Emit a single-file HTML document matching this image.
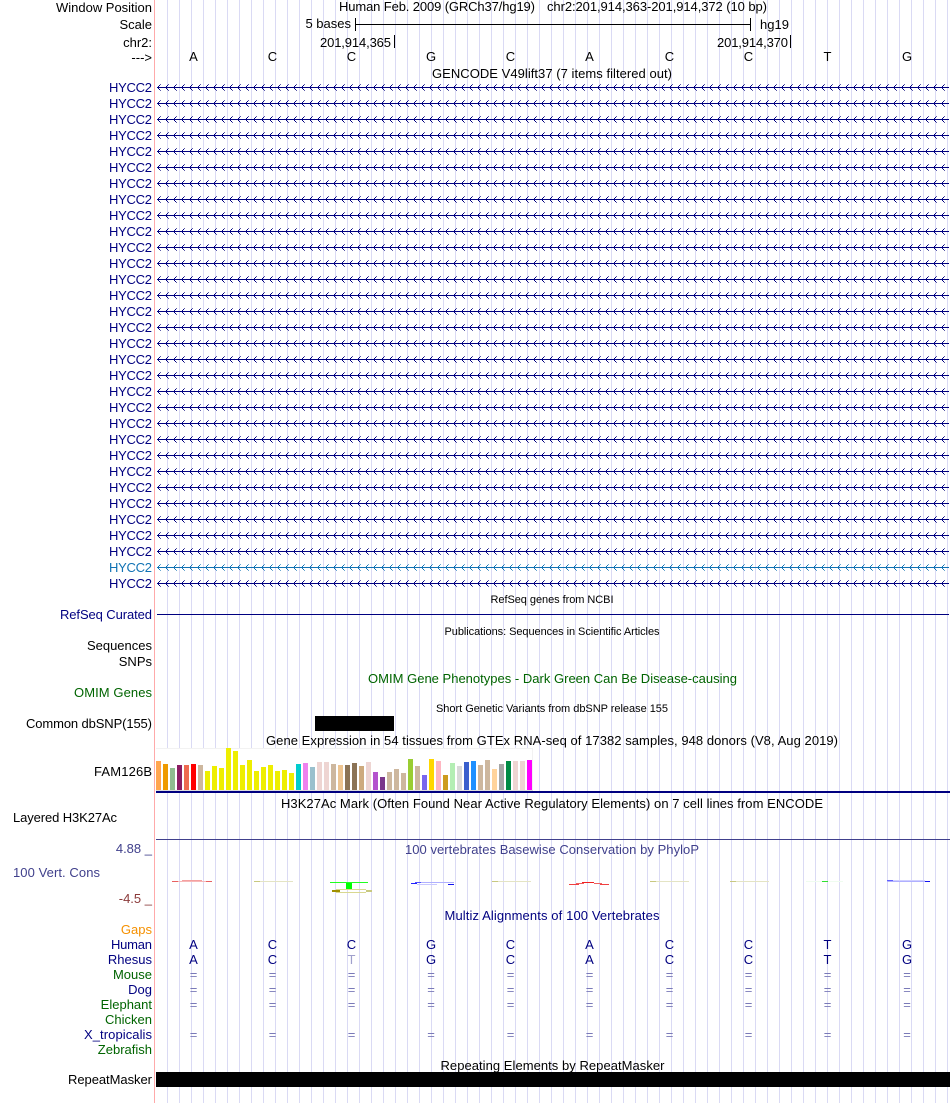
<!DOCTYPE html>
<html><head><meta charset="utf-8"><style>
html,body{margin:0;padding:0;background:#fff;width:950px;height:1103px;overflow:hidden}
svg{display:block}
text{font-family:"Liberation Sans",sans-serif;font-size:13px;fill:#000}
.r{text-anchor:end}
.c{text-anchor:middle}
.n{fill:#000080}
.g{fill:#006400}
.s{font-size:11px}
.e{fill:#7a7ab8}
.l{fill:#000080}
</style></head><body>
<svg width="950" height="1103" viewBox="0 0 950 1103" xmlns="http://www.w3.org/2000/svg">
<defs>
<pattern id="grid" patternUnits="userSpaceOnUse" x="167" y="0" width="12" height="10"><rect width="1" height="10" fill="#dadaf4"/></pattern>
<pattern id="arr" patternUnits="userSpaceOnUse" x="157" y="84" width="8" height="16"><path fill="#000080" d="M0 3h8v1H0zM1 2h1v1H1zM1 4h1v1H1zM2 1h1v1H2zM2 5h1v1H2z"/><path fill="#5a5aa8" d="M3 0h1v1H3zM3 6h1v1H3z"/></pattern>
<pattern id="arb" patternUnits="userSpaceOnUse" x="157" y="564" width="8" height="7"><path fill="#1072b4" d="M0 3h8v1H0zM1 2h1v1H1zM1 4h1v1H1zM2 1h1v1H2zM2 5h1v1H2z"/><path fill="#6aa8d0" d="M3 0h1v1H3zM3 6h1v1H3z"/></pattern>
</defs>
<g shape-rendering="crispEdges">
<rect x="156" y="0" width="794" height="1103" fill="url(#grid)"/>
<rect x="154" y="0" width="1" height="1103" fill="#ffaaaa"/>
<rect x="157" y="84" width="792" height="503" fill="url(#arr)" />
<rect x="157" y="564" width="793" height="7" fill="#fff"/>
<rect x="157" y="564" width="793" height="7" fill="url(#grid)"/>
<rect x="157" y="564" width="792" height="7" fill="url(#arb)"/>
<rect x="157" y="614" width="792" height="1" fill="#000080"/>
<rect x="315" y="716" width="79" height="15" fill="#000"/>
<rect x="156" y="748" width="377" height="43" fill="#fff"/>
<rect x="156" y="748" width="377" height="1" fill="#f2f2f2"/>
<rect x="532" y="748" width="1" height="43" fill="#f2f2f2"/>
<rect x="156" y="790" width="377" height="1" fill="#ddd"/>
<rect x="156" y="761" width="5" height="29" fill="#FFA54F"/>
<rect x="163" y="764" width="5" height="26" fill="#EE9A00"/>
<rect x="170" y="768" width="5" height="22" fill="#8FBC8F"/>
<rect x="177" y="765" width="5" height="25" fill="#8B1C62"/>
<rect x="184" y="765" width="5" height="25" fill="#EE6A50"/>
<rect x="191" y="764" width="5" height="26" fill="#FF0000"/>
<rect x="198" y="765" width="5" height="25" fill="#CDB79E"/>
<rect x="205" y="771" width="5" height="19" fill="#EEEE00"/>
<rect x="212" y="766" width="5" height="24" fill="#EEEE00"/>
<rect x="219" y="768" width="5" height="22" fill="#EEEE00"/>
<rect x="226" y="748" width="5" height="42" fill="#EEEE00"/>
<rect x="233" y="751" width="5" height="39" fill="#EEEE00"/>
<rect x="240" y="765" width="5" height="25" fill="#EEEE00"/>
<rect x="247" y="760" width="5" height="30" fill="#EEEE00"/>
<rect x="254" y="771" width="5" height="19" fill="#EEEE00"/>
<rect x="261" y="767" width="5" height="23" fill="#EEEE00"/>
<rect x="268" y="765" width="5" height="25" fill="#EEEE00"/>
<rect x="275" y="771" width="5" height="19" fill="#EEEE00"/>
<rect x="282" y="770" width="5" height="20" fill="#EEEE00"/>
<rect x="289" y="773" width="5" height="17" fill="#EEEE00"/>
<rect x="296" y="764" width="5" height="26" fill="#00CDCD"/>
<rect x="303" y="763" width="5" height="27" fill="#EE82EE"/>
<rect x="310" y="767" width="5" height="23" fill="#9AC0CD"/>
<rect x="317" y="762" width="5" height="28" fill="#EED5D2"/>
<rect x="324" y="762" width="5" height="28" fill="#EED5D2"/>
<rect x="331" y="764" width="5" height="26" fill="#CDB79E"/>
<rect x="338" y="765" width="5" height="25" fill="#EEC591"/>
<rect x="345" y="765" width="5" height="25" fill="#8B7355"/>
<rect x="352" y="763" width="5" height="27" fill="#8B7355"/>
<rect x="359" y="766" width="5" height="24" fill="#CDAA7D"/>
<rect x="366" y="762" width="5" height="28" fill="#EED5D2"/>
<rect x="373" y="772" width="5" height="18" fill="#B452CD"/>
<rect x="380" y="777" width="5" height="13" fill="#7A378B"/>
<rect x="387" y="772" width="5" height="18" fill="#CDB79E"/>
<rect x="394" y="769" width="5" height="21" fill="#CDB79E"/>
<rect x="401" y="773" width="5" height="17" fill="#CDB79E"/>
<rect x="408" y="759" width="5" height="31" fill="#9ACD32"/>
<rect x="415" y="766" width="5" height="24" fill="#CDB79E"/>
<rect x="422" y="775" width="5" height="15" fill="#7A67EE"/>
<rect x="429" y="759" width="5" height="31" fill="#FFD700"/>
<rect x="436" y="761" width="5" height="29" fill="#FFB6C1"/>
<rect x="443" y="775" width="5" height="15" fill="#CD9B1D"/>
<rect x="450" y="763" width="5" height="27" fill="#B4EEB4"/>
<rect x="457" y="766" width="5" height="24" fill="#D9D9D9"/>
<rect x="464" y="762" width="5" height="28" fill="#3A5FCD"/>
<rect x="471" y="761" width="5" height="29" fill="#1E90FF"/>
<rect x="478" y="765" width="5" height="25" fill="#CDB79E"/>
<rect x="485" y="760" width="5" height="30" fill="#CDB79E"/>
<rect x="492" y="769" width="5" height="21" fill="#FFD39B"/>
<rect x="499" y="764" width="5" height="26" fill="#A6A6A6"/>
<rect x="506" y="761" width="5" height="29" fill="#008B45"/>
<rect x="513" y="761" width="5" height="29" fill="#EED5D2"/>
<rect x="520" y="761" width="5" height="29" fill="#EED5D2"/>
<rect x="527" y="760" width="5" height="30" fill="#FF00FF"/>
<rect x="156" y="791" width="794" height="2" fill="#000080"/>
<rect x="156" y="839" width="794" height="1" fill="#40408c"/>
<rect x="156" y="1072" width="794" height="15" fill="#000"/>
<rect x="355" y="24" width="396" height="1" fill="#000"/>
<rect x="355" y="18" width="1" height="13" fill="#000"/>
<rect x="750" y="18" width="1" height="13" fill="#000"/>
<rect x="394" y="35" width="1" height="13" fill="#000"/>
<rect x="790" y="35" width="1" height="13" fill="#000"/>
<rect x="172" y="881" width="40" height="1" fill="#f7b8b8"/><rect x="182" y="880" width="20" height="1" fill="#f4a0a0"/><rect x="172" y="881" width="6" height="1" fill="#e86060"/><rect x="206" y="881" width="6" height="1" fill="#e86060"/>
<rect x="254" y="881" width="39" height="1" fill="#e4e4c4"/><rect x="254" y="881" width="6" height="1" fill="#c8c880"/>
<rect x="330" y="882" width="38" height="1" fill="#20ff20"/><rect x="346" y="883" width="6" height="6" fill="#00ff00"/>
<rect x="336" y="889" width="30" height="1" fill="#d8d890"/><rect x="336" y="892" width="30" height="1" fill="#d8d890"/><rect x="332" y="890" width="8" height="2" fill="#a09000"/><rect x="366" y="890" width="6" height="2" fill="#c8c880"/>
<rect x="411" y="883" width="6" height="1" fill="#2020ff"/><rect x="415" y="882" width="39" height="1" fill="#b0b0ff"/><rect x="417" y="884" width="20" height="1" fill="#c8c8ff"/><rect x="448" y="884" width="6" height="1" fill="#1010f0"/><rect x="415" y="882" width="6" height="1" fill="#5050ff"/>
<rect x="492" y="881" width="39" height="1" fill="#e4e4c4"/><rect x="492" y="881" width="6" height="1" fill="#c8c880"/>
<rect x="569" y="884" width="10" height="1" fill="#f04040"/><rect x="576" y="883" width="8" height="1" fill="#f06060"/><rect x="582" y="882" width="12" height="1" fill="#f02020"/><rect x="594" y="883" width="8" height="1" fill="#f06060"/><rect x="600" y="884" width="9" height="1" fill="#f04040"/>
<rect x="650" y="881" width="39" height="1" fill="#e4e4c4"/><rect x="650" y="881" width="6" height="1" fill="#c8c880"/>
<rect x="730" y="881" width="39" height="1" fill="#e4e4c4"/><rect x="730" y="881" width="6" height="1" fill="#c8c880"/>
<rect x="806" y="881" width="37" height="1" fill="#effcef"/><rect x="822" y="881" width="6" height="1" fill="#30e030"/>
<rect x="887" y="881" width="43" height="1" fill="#b0b0ff"/><rect x="887" y="880" width="6" height="1" fill="#6060ff"/><rect x="893" y="880" width="32" height="1" fill="#d0d0ff"/><rect x="925" y="881" width="5" height="1" fill="#1010f0"/>
</g>
<text x="152" y="12" class="r" textLength="96">Window Position</text>
<text x="152" y="29" class="r">Scale</text>
<text x="152" y="47" class="r">chr2:</text>
<text x="152" y="62" class="r">---&gt;</text>
<text x="339" y="11" textLength="196">Human Feb. 2009 (GRCh37/hg19)</text>
<text x="547" y="11" textLength="220">chr2:201,914,363-201,914,372 (10 bp)</text>
<text x="351" y="28" class="r">5 bases</text>
<text x="760" y="29">hg19</text>
<text x="391" y="47" class="r" textLength="71">201,914,365</text>
<text x="788" y="47" class="r" textLength="71">201,914,370</text>
<text x="193.500" y="61" class="c">A</text>
<text x="272.500" y="61" class="c">C</text>
<text x="351.500" y="61" class="c">C</text>
<text x="431" y="61" class="c">G</text>
<text x="510.500" y="61" class="c">C</text>
<text x="589.500" y="61" class="c">A</text>
<text x="669.500" y="61" class="c">C</text>
<text x="748.500" y="61" class="c">C</text>
<text x="827.500" y="61" class="c">T</text>
<text x="907" y="61" class="c">G</text>
<text x="552" y="78" class="c" textLength="240">GENCODE V49lift37 (7 items filtered out)</text>
<text x="152" y="92" class="r n" textLength="43">HYCC2</text>
<text x="152" y="108" class="r n" textLength="43">HYCC2</text>
<text x="152" y="124" class="r n" textLength="43">HYCC2</text>
<text x="152" y="140" class="r n" textLength="43">HYCC2</text>
<text x="152" y="156" class="r n" textLength="43">HYCC2</text>
<text x="152" y="172" class="r n" textLength="43">HYCC2</text>
<text x="152" y="188" class="r n" textLength="43">HYCC2</text>
<text x="152" y="204" class="r n" textLength="43">HYCC2</text>
<text x="152" y="220" class="r n" textLength="43">HYCC2</text>
<text x="152" y="236" class="r n" textLength="43">HYCC2</text>
<text x="152" y="252" class="r n" textLength="43">HYCC2</text>
<text x="152" y="268" class="r n" textLength="43">HYCC2</text>
<text x="152" y="284" class="r n" textLength="43">HYCC2</text>
<text x="152" y="300" class="r n" textLength="43">HYCC2</text>
<text x="152" y="316" class="r n" textLength="43">HYCC2</text>
<text x="152" y="332" class="r n" textLength="43">HYCC2</text>
<text x="152" y="348" class="r n" textLength="43">HYCC2</text>
<text x="152" y="364" class="r n" textLength="43">HYCC2</text>
<text x="152" y="380" class="r n" textLength="43">HYCC2</text>
<text x="152" y="396" class="r n" textLength="43">HYCC2</text>
<text x="152" y="412" class="r n" textLength="43">HYCC2</text>
<text x="152" y="428" class="r n" textLength="43">HYCC2</text>
<text x="152" y="444" class="r n" textLength="43">HYCC2</text>
<text x="152" y="460" class="r n" textLength="43">HYCC2</text>
<text x="152" y="476" class="r n" textLength="43">HYCC2</text>
<text x="152" y="492" class="r n" textLength="43">HYCC2</text>
<text x="152" y="508" class="r n" textLength="43">HYCC2</text>
<text x="152" y="524" class="r n" textLength="43">HYCC2</text>
<text x="152" y="540" class="r n" textLength="43">HYCC2</text>
<text x="152" y="556" class="r n" textLength="43">HYCC2</text>
<text x="152" y="572" class="r" style="fill:#1072b4" textLength="43">HYCC2</text>
<text x="152" y="588" class="r n" textLength="43">HYCC2</text>
<text x="552" y="603" class="c s" textLength="123">RefSeq genes from NCBI</text>
<text x="152" y="619" class="r n" textLength="92">RefSeq Curated</text>
<text x="552" y="635" class="c s" textLength="215">Publications: Sequences in Scientific Articles</text>
<text x="152" y="650" class="r">Sequences</text>
<text x="152" y="666" class="r">SNPs</text>
<text x="552.500" y="683" class="c g" textLength="369">OMIM Gene Phenotypes - Dark Green Can Be Disease-causing</text>
<text x="152" y="697" class="r g" textLength="78">OMIM Genes</text>
<text x="552" y="712" class="c s" textLength="232">Short Genetic Variants from dbSNP release 155</text>
<text x="152" y="728" class="r" textLength="126">Common dbSNP(155)</text>
<text x="552" y="745" class="c" textLength="572">Gene Expression in 54 tissues from GTEx RNA-seq of 17382 samples, 948 donors (V8, Aug 2019)</text>
<text x="152" y="776" class="r" textLength="58">FAM126B</text>
<text x="552" y="808" class="c" textLength="542">H3K27Ac Mark (Often Found Near Active Regulatory Elements) on 7 cell lines from ENCODE</text>
<text x="13" y="822" textLength="104">Layered H3K27Ac</text>
<text x="152" y="853" class="r" style="fill:#40408c">4.88 _</text>
<text x="552" y="854" class="c" style="fill:#40408c" textLength="294">100 vertebrates Basewise Conservation by PhyloP</text>
<text x="13" y="877" style="fill:#40408c" textLength="87">100 Vert. Cons</text>
<text x="152" y="903" class="r" style="fill:#8b3a3a">-4.5 _</text>
<text x="552" y="920" class="c n" textLength="215">Multiz Alignments of 100 Vertebrates</text>
<text x="152" y="934" class="r" style="fill:#f59000">Gaps</text>
<text x="152" y="949" class="r n" textLength="41">Human</text>
<text x="152" y="964" class="r n">Rhesus</text>
<text x="152" y="979" class="r g">Mouse</text>
<text x="152" y="994" class="r n">Dog</text>
<text x="152" y="1009" class="r g">Elephant</text>
<text x="152" y="1024" class="r g">Chicken</text>
<text x="152" y="1039" class="r n" textLength="68">X_tropicalis</text>
<text x="152" y="1054" class="r g">Zebrafish</text>
<text x="193.500" y="949" class="c l">A</text><text x="272.500" y="949" class="c l">C</text><text x="351.500" y="949" class="c l">C</text><text x="431" y="949" class="c l">G</text><text x="510.500" y="949" class="c l">C</text><text x="589.500" y="949" class="c l">A</text><text x="669.500" y="949" class="c l">C</text><text x="748.500" y="949" class="c l">C</text><text x="827.500" y="949" class="c l">T</text><text x="907" y="949" class="c l">G</text>
<text x="193.500" y="964" class="c l">A</text><text x="272.500" y="964" class="c l">C</text><text x="351.500" y="964" class="c" style="fill:#a0a0cc">T</text><text x="431" y="964" class="c l">G</text><text x="510.500" y="964" class="c l">C</text><text x="589.500" y="964" class="c l">A</text><text x="669.500" y="964" class="c l">C</text><text x="748.500" y="964" class="c l">C</text><text x="827.500" y="964" class="c l">T</text><text x="907" y="964" class="c l">G</text>
<text x="193.500" y="979" class="c e">=</text><text x="272.500" y="979" class="c e">=</text><text x="351.500" y="979" class="c e">=</text><text x="431" y="979" class="c e">=</text><text x="510.500" y="979" class="c e">=</text><text x="589.500" y="979" class="c e">=</text><text x="669.500" y="979" class="c e">=</text><text x="748.500" y="979" class="c e">=</text><text x="827.500" y="979" class="c e">=</text><text x="907" y="979" class="c e">=</text>
<text x="193.500" y="994" class="c e">=</text><text x="272.500" y="994" class="c e">=</text><text x="351.500" y="994" class="c e">=</text><text x="431" y="994" class="c e">=</text><text x="510.500" y="994" class="c e">=</text><text x="589.500" y="994" class="c e">=</text><text x="669.500" y="994" class="c e">=</text><text x="748.500" y="994" class="c e">=</text><text x="827.500" y="994" class="c e">=</text><text x="907" y="994" class="c e">=</text>
<text x="193.500" y="1009" class="c e">=</text><text x="272.500" y="1009" class="c e">=</text><text x="351.500" y="1009" class="c e">=</text><text x="431" y="1009" class="c e">=</text><text x="510.500" y="1009" class="c e">=</text><text x="589.500" y="1009" class="c e">=</text><text x="669.500" y="1009" class="c e">=</text><text x="748.500" y="1009" class="c e">=</text><text x="827.500" y="1009" class="c e">=</text><text x="907" y="1009" class="c e">=</text>
<text x="193.500" y="1039" class="c e">=</text><text x="272.500" y="1039" class="c e">=</text><text x="351.500" y="1039" class="c e">=</text><text x="431" y="1039" class="c e">=</text><text x="510.500" y="1039" class="c e">=</text><text x="589.500" y="1039" class="c e">=</text><text x="669.500" y="1039" class="c e">=</text><text x="748.500" y="1039" class="c e">=</text><text x="827.500" y="1039" class="c e">=</text><text x="907" y="1039" class="c e">=</text>
<text x="552.500" y="1070" class="c" textLength="224">Repeating Elements by RepeatMasker</text>
<text x="152" y="1084" class="r" textLength="84">RepeatMasker</text>
</svg>
</body></html>
